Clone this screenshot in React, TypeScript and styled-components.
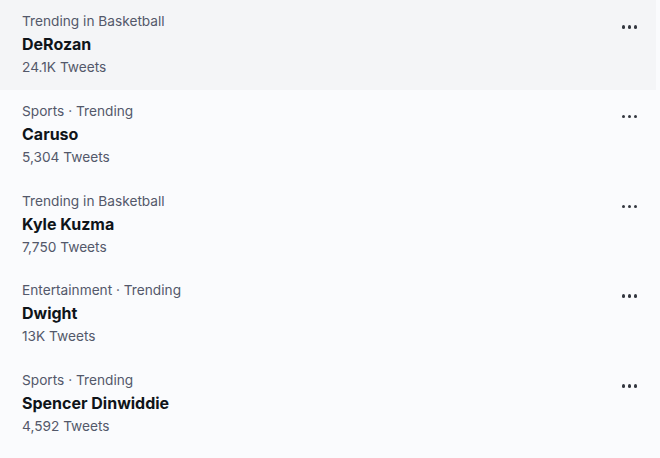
import React from "react";
import styled, { createGlobalStyle } from "styled-components";

const Global = createGlobalStyle`
  html, body { margin: 0; padding: 0; background: #fafbfd; }
  body { font-family: Inter, "Noto Sans", sans-serif; }
`;

const List = styled.div`
  width: 656px;
  display: flex;
  flex-direction: column;
`;

const Row = styled.div<{ $active?: boolean }>`
  height: 89.75px;
  box-sizing: border-box;
  padding: 10px 22px 0 22px;
  display: flex;
  justify-content: space-between;
  align-items: flex-start;
  background: ${(p) => (p.$active ? "#f4f5f7" : "transparent")};
`;

const Info = styled.div`
  display: flex;
  flex-direction: column;
`;

const Meta = styled.div`
  font-size: 13.7px;
  line-height: 23px;
  color: #53586a;
`;

const Name = styled.div`
  font-size: 16px;
  line-height: 23px;
  font-weight: 650;
  color: #0f1419;
`;

const More = styled.div`
  display: flex;
  gap: 2.5px;
  margin-top: 15px;
  margin-right: -3px;
`;

const Dot = styled.span`
  width: 3.5px;
  height: 3.5px;
  border-radius: 50%;
  background: #33373f;
`;

const trends = [
  { meta: "Trending in Basketball", name: "DeRozan", count: "24.1K Tweets" },
  { meta: "Sports · Trending", name: "Caruso", count: "5,304 Tweets" },
  { meta: "Trending in Basketball", name: "Kyle Kuzma", count: "7,750 Tweets" },
  { meta: "Entertainment · Trending", name: "Dwight", count: "13K Tweets" },
  { meta: "Sports · Trending", name: "Spencer Dinwiddie", count: "4,592 Tweets" },
];

export default function App() {
  return (
    <>
      <Global />
      <List>
        {trends.map((t, i) => (
          <Row key={i} $active={i === 0}>
            <Info>
              <Meta>{t.meta}</Meta>
              <Name>{t.name}</Name>
              <Meta>{t.count}</Meta>
            </Info>
            <More>
              <Dot />
              <Dot />
              <Dot />
            </More>
          </Row>
        ))}
      </List>
    </>
  );
}
